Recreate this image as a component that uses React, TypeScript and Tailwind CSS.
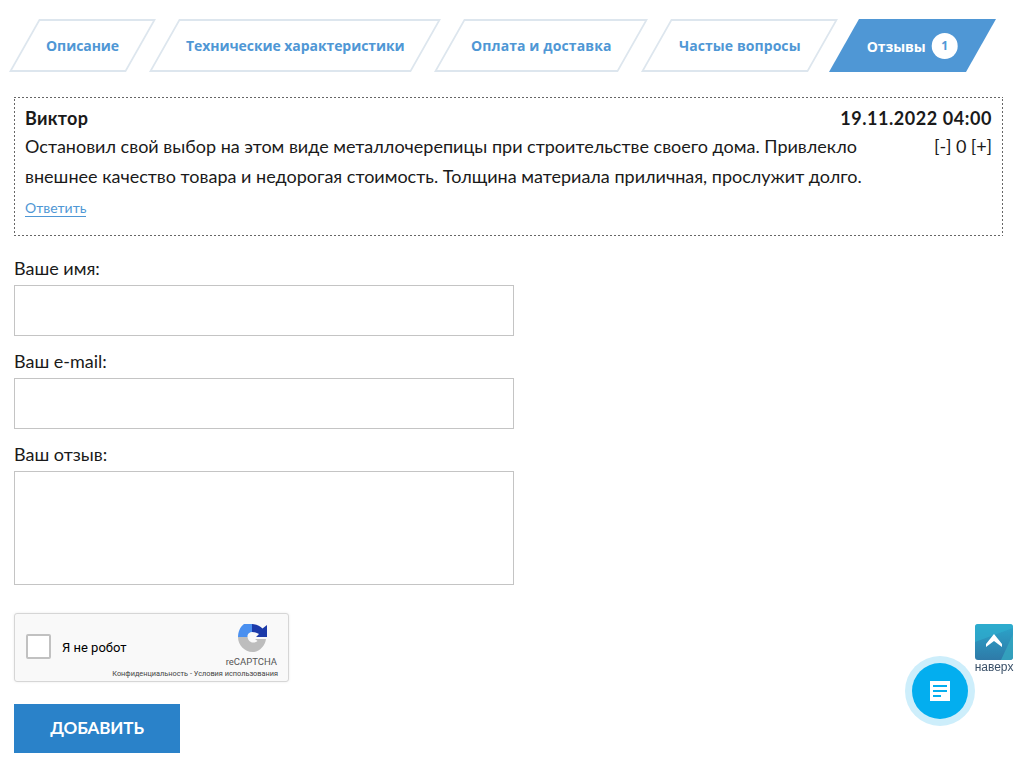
const tabs = [
  { label: "Описание", width: "w-[117px]", tracking: "tracking-[-0.07px]" },
  { label: "Технические характеристики", width: "w-[262px]", tracking: "tracking-[-0.07px]" },
  { label: "Оплата и доставка", width: "w-[184px]", tracking: "tracking-[0.11px]" },
  { label: "Частые вопросы", width: "w-[167px]", tracking: "tracking-[0.07px]" },
];

function Tabs() {
  return (
    <div className="flex h-[53px] gap-[23px] pl-[24px] font-['Open_Sans',sans-serif] text-[14px] font-bold">
      {tabs.map((tab) => (
        <div
          key={tab.label}
          className={`flex h-full ${tab.width} skew-x-[-29.5deg] items-center justify-center border-2 border-[#dde6ee] bg-white`}
        >
          <span className={`skew-x-[29.5deg] ${tab.tracking} whitespace-nowrap text-[#4f97d5]`}>{tab.label}</span>
        </div>
      ))}
      <div className="-ml-[2px] flex h-full w-[137px] skew-x-[-29.5deg] items-center justify-center bg-[#4f97d5]">
        <div className="flex skew-x-[29.5deg] items-center gap-[6px] text-white">
          <span className="tracking-[-0.07px]">Отзывы</span>
          <span className="flex size-[26px] items-center justify-center rounded-full bg-white text-[12px] text-[#4f97d5]">1</span>
        </div>
      </div>
    </div>
  );
}

function Comment() {
  return (
    <div className="mt-[25px] h-[139px] bg-[linear-gradient(90deg,#666_50%,transparent_50%),linear-gradient(90deg,#666_50%,transparent_50%),linear-gradient(0deg,#666_50%,transparent_50%),linear-gradient(0deg,#666_50%,transparent_50%)] bg-[length:4px_1px,4px_1px,1px_4px,1px_4px] bg-[position:0_0,0_100%,0_0,100%_0] [background-repeat:repeat-x,repeat-x,repeat-y,repeat-y] pt-[8px] pr-[11px] pl-[11px]">
      <div className="flex justify-between text-[18px] leading-[26px] font-bold text-[#1a1a1a]">
        <span className="tracking-[0.3px]">Виктор</span>
        <span className="tracking-[0.56px]">19.11.2022 04:00</span>
      </div>
      <div className="flex justify-between text-[18px] leading-[30px] text-[#1a1a1a]">
        <p className="w-[850px]">
          Остановил свой выбор на этом виде металлочерепицы при строительстве своего дома. Привлекло внешнее качество товара и недорогая стоимость. Толщина материала приличная, прослужит долго.
        </p>
        <span className="tracking-[-0.1px]">[-] 0 [+]</span>
      </div>
      <a href="#" className="mt-[8px] block w-fit border-b border-[#4f97d5] text-[14px] leading-[17px] text-[#4f97d5]">
        Ответить
      </a>
    </div>
  );
}

function Field({ label, tall }: { label: string; tall?: boolean }) {
  return (
    <div>
      <div className="text-[18px] leading-[22px] text-[#1a1a1a]">{label}</div>
      {tall ? (
        <textarea className="mt-[6px] block h-[114px] w-[500px] resize-none border border-[#c4c4c4] bg-white" />
      ) : (
        <input className="mt-[6px] block h-[51px] w-[500px] border border-[#c4c4c4] bg-white" />
      )}
    </div>
  );
}

function RecaptchaLogo() {
  return (
    <svg width="29" height="28" viewBox="0 0 29 28">
      <path d="M6 0H14V8C12 8 10 9.500 9.500 11.500V13H0C0 8 2 3 6 0Z" fill="#4a90f0" />
      <path d="M14 0C18 0 22 2 24.500 4.500L29 1V13H18L21 10C19.500 9 17 8 14 8Z" fill="#1c3aa9" />
      <path d="M0 13H9.500C10 16 12 18.500 15 18.500C17 18.500 18.500 18 19.500 17L17 15H28C27 22 21.500 28 14.500 28C6.500 28 0 21 0 13Z" fill="#bdbdbd" />
    </svg>
  );
}

function Recaptcha() {
  return (
    <div className="relative mt-[28px] h-[69px] w-[275px] rounded-[3px] border border-[#d6d6d6] bg-[#f9f9f9] font-['Roboto',sans-serif] shadow-[0_0_3px_rgba(0,0,0,0.08)]">
      <div className="flex h-full items-start pt-[20px] pl-[11px]">
        <div className="size-[25px] rounded-[2px] border-2 border-[#c1c1c1] bg-white" />
        <span className="ml-[11px] pt-[6px] text-[13px] leading-[16px] text-black">Я не робот</span>
      </div>
      <div className="absolute top-[10px] left-[223px]">
        <RecaptchaLogo />
      </div>
      <div className="absolute top-[42px] right-[11px] text-[9.5px] leading-[12px] text-[#555]">reCAPTCHA</div>
      <div className="absolute right-[10px] bottom-[3px] text-[7.35px] leading-[9px] whitespace-nowrap text-[#444]">
        Конфиденциальность - Условия использования
      </div>
    </div>
  );
}

function ScrollTop() {
  return (
    <div className="fixed top-[624px] left-[975px] flex w-[38px] flex-col items-center">
      <svg width="38" height="36" viewBox="0 0 38 36" className="rounded-[3px]">
        <defs>
          <linearGradient id="tile" x1="0" y1="0" x2="0" y2="1">
            <stop offset="0" stopColor="#2ba6cb" />
            <stop offset="1" stopColor="#2e7aa8" />
          </linearGradient>
        </defs>
        <rect width="38" height="36" fill="url(#tile)" />
        <path d="M0 0H38V4L0 18Z" fill="#2fb0d0" opacity="0.6" />
        <path d="M38 10V36H26Z" fill="#35a8c0" opacity="0.8" />
        <path d="M11 23L11 20L19 10L27 20L27 23L19 17Z" fill="#fff" />
      </svg>
      <span className="mt-px font-['Liberation_Sans',sans-serif] text-[12px] leading-[13px] text-[#3a5068]">наверх</span>
    </div>
  );
}

function FloatingButton() {
  return (
    <div className="fixed top-[656px] left-[905px] flex size-[70px] items-center justify-center rounded-full bg-[#cdeefb]">
      <div className="flex size-[56px] items-center justify-center rounded-full bg-[#03aeef]">
        <svg width="20" height="20" viewBox="0 0 20 20">
          <path d="M0 0H20V20H0Z" fill="#fff" />
          <path d="M3 4H17V6H3ZM3 9H17V11H3ZM3 14H11V16H3Z" fill="#03aeef" />
        </svg>
      </div>
    </div>
  );
}

export default function App() {
  return (
    <div className="relative h-[757px] overflow-hidden bg-white pt-[19px] font-['Lato',sans-serif]">
      <Tabs />
      <div className="pr-[17px] pl-[14px]">
        <Comment />
        <div className="mt-[21px] flex flex-col gap-[14px]">
          <Field label="Ваше имя:" />
          <Field label="Ваш e-mail:" />
          <Field label="Ваш отзыв:" tall />
        </div>
        <Recaptcha />
        <button className="mt-[22px] block h-[49px] w-[166px] bg-[#2a82c9] pb-[2px] text-[17px] font-bold tracking-[-0.1px] text-white">
          ДОБАВИТЬ
        </button>
      </div>
      <ScrollTop />
      <FloatingButton />
    </div>
  );
}
